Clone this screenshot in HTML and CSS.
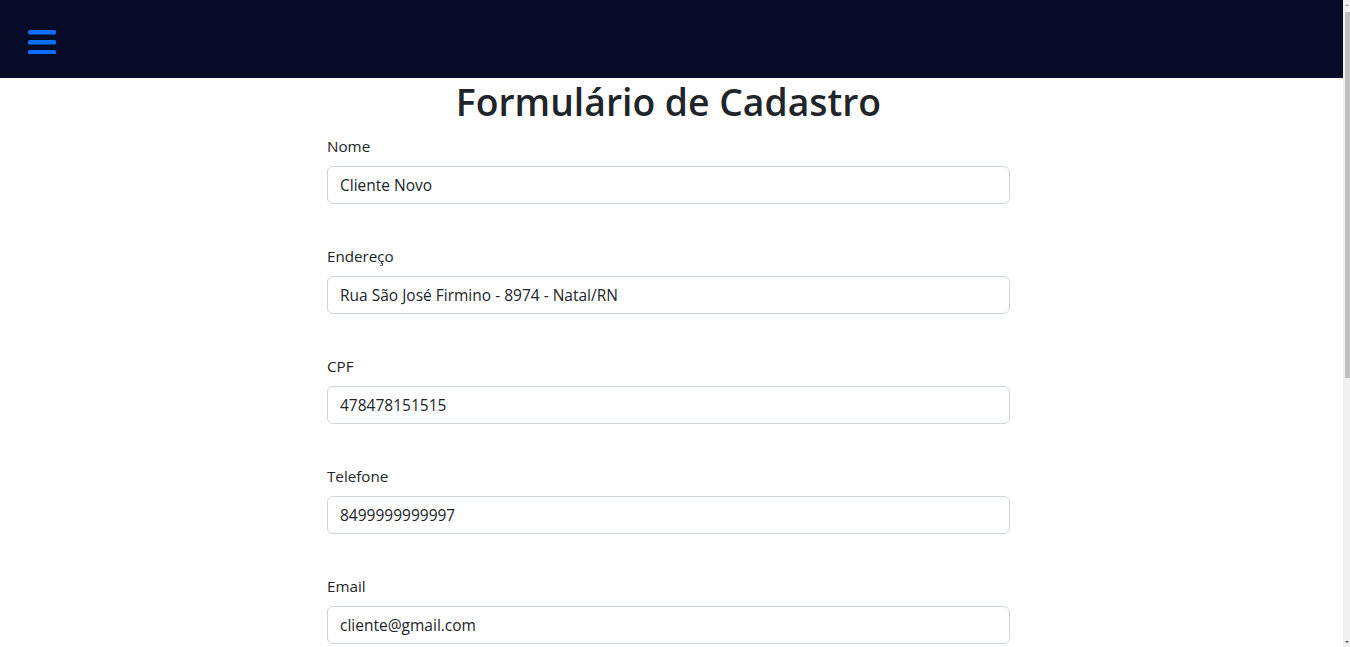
FILE: index.html
```html
<!DOCTYPE html>
<html lang="pt-BR">
<head>
<meta charset="utf-8">
<title>Formulário de Cadastro</title>
<link rel="stylesheet" href="styles.css">
</head>
<body>
<header class="navbar">
  <button class="menu-btn" aria-label="Menu">
    <svg width="28" height="24" viewBox="0 0 28 24">
      <rect x="0" y="0" width="28" height="4.5" rx="1.5" fill="#0d6efd"/>
      <rect x="0" y="10" width="28" height="4.5" rx="1.5" fill="#0d6efd"/>
      <rect x="0" y="20" width="28" height="4.5" rx="1.5" fill="#0d6efd"/>
    </svg>
  </button>
</header>
<main class="page">
  <h1 class="title">Formulário de Cadastro</h1>
  <form class="form">
    <div class="group">
      <label class="label" for="nome">Nome</label>
      <input class="input" id="nome" type="text" value="Cliente Novo">
    </div>
    <div class="group">
      <label class="label" for="endereco">Endereço</label>
      <input class="input" id="endereco" type="text" value="Rua São José Firmino - 8974 - Natal/RN">
    </div>
    <div class="group">
      <label class="label" for="cpf">CPF</label>
      <input class="input" id="cpf" type="text" value="478478151515">
    </div>
    <div class="group">
      <label class="label" for="telefone">Telefone</label>
      <input class="input" id="telefone" type="text" value="8499999999997">
    </div>
    <div class="group">
      <label class="label" for="email">Email</label>
      <input class="input" id="email" type="email" value="cliente@gmail.com">
    </div>
    <div class="group">
      <label class="label" for="senha">Senha</label>
      <input class="input" id="senha" type="password" value="12345678">
    </div>
    <div class="group">
      <label class="label" for="confirma">Confirmar senha</label>
      <input class="input" id="confirma" type="password" value="12345678">
    </div>
    <div class="actions">
      <button class="submit" type="submit">Cadastrar</button>
    </div>
  </form>
</main>
<div class="scrollbar" aria-hidden="true">
  <span class="arrow arrow-up"></span>
  <span class="thumb"></span>
  <span class="arrow arrow-down"></span>
</div>
</body>
</html>
```

FILE: styles.css
```css
* { box-sizing: border-box; }
html, body {
  margin: 0;
  padding: 0;
}
body {
  font-family: "Open Sans", "Noto Sans", "Liberation Sans", sans-serif;
  font-size: 15.2px;
  color: #212529;
  background: #fff;
  padding-right: 7px;
}
.navbar {
  height: 78px;
  background: #060c27;
  display: flex;
  align-items: center;
  padding-left: 28px;
}
.menu-btn {
  background: none;
  border: 0;
  padding: 0;
  margin-top: 6px;
  display: flex;
  cursor: pointer;
}
.page {
  width: 689px;
  padding-right: 6px;
  margin: 0 auto;
  padding-bottom: 60px;
}
.title {
  margin: 0 0 8px;
  font-size: 37.3px;
  font-weight: 600;
  line-height: 48px;
  text-align: center;
}
.form {
  display: flex;
  flex-direction: column;
  gap: 40px;
}
.group {
  display: flex;
  flex-direction: column;
}
.label {
  line-height: 24px;
  margin-bottom: 8px;
}
.input {
  height: 38px;
  padding: 6px 12px;
  border: 1px solid #ced4da;
  border-radius: 6px;
  font-family: inherit;
  font-size: 15.5px;
  color: #212529;
  background: #fff;
}
.actions {
  display: flex;
}
.submit {
  font: inherit;
  color: #fff;
  background: #0d6efd;
  border: 1px solid #0d6efd;
  border-radius: 6px;
  padding: 6px 12px;
}
.scrollbar {
  position: fixed;
  top: 0;
  right: 0;
  bottom: 0;
  width: 7px;
  background: #f1f1f1;
  display: flex;
  flex-direction: column;
  align-items: flex-end;
  padding: 4px 0 4px;
}
.arrow {
  width: 0;
  height: 0;
  border-left: 2px solid transparent;
  border-right: 2px solid transparent;
  margin-right: 1px;
}
.arrow-up {
  border-bottom: 2px solid #a3a3a3;
}
.arrow-down {
  border-top: 2px solid #505050;
  margin-top: auto;
}
.thumb {
  width: 5px;
  height: 366px;
  margin-top: 6px;
  background: #c1c1c1;
}
```
